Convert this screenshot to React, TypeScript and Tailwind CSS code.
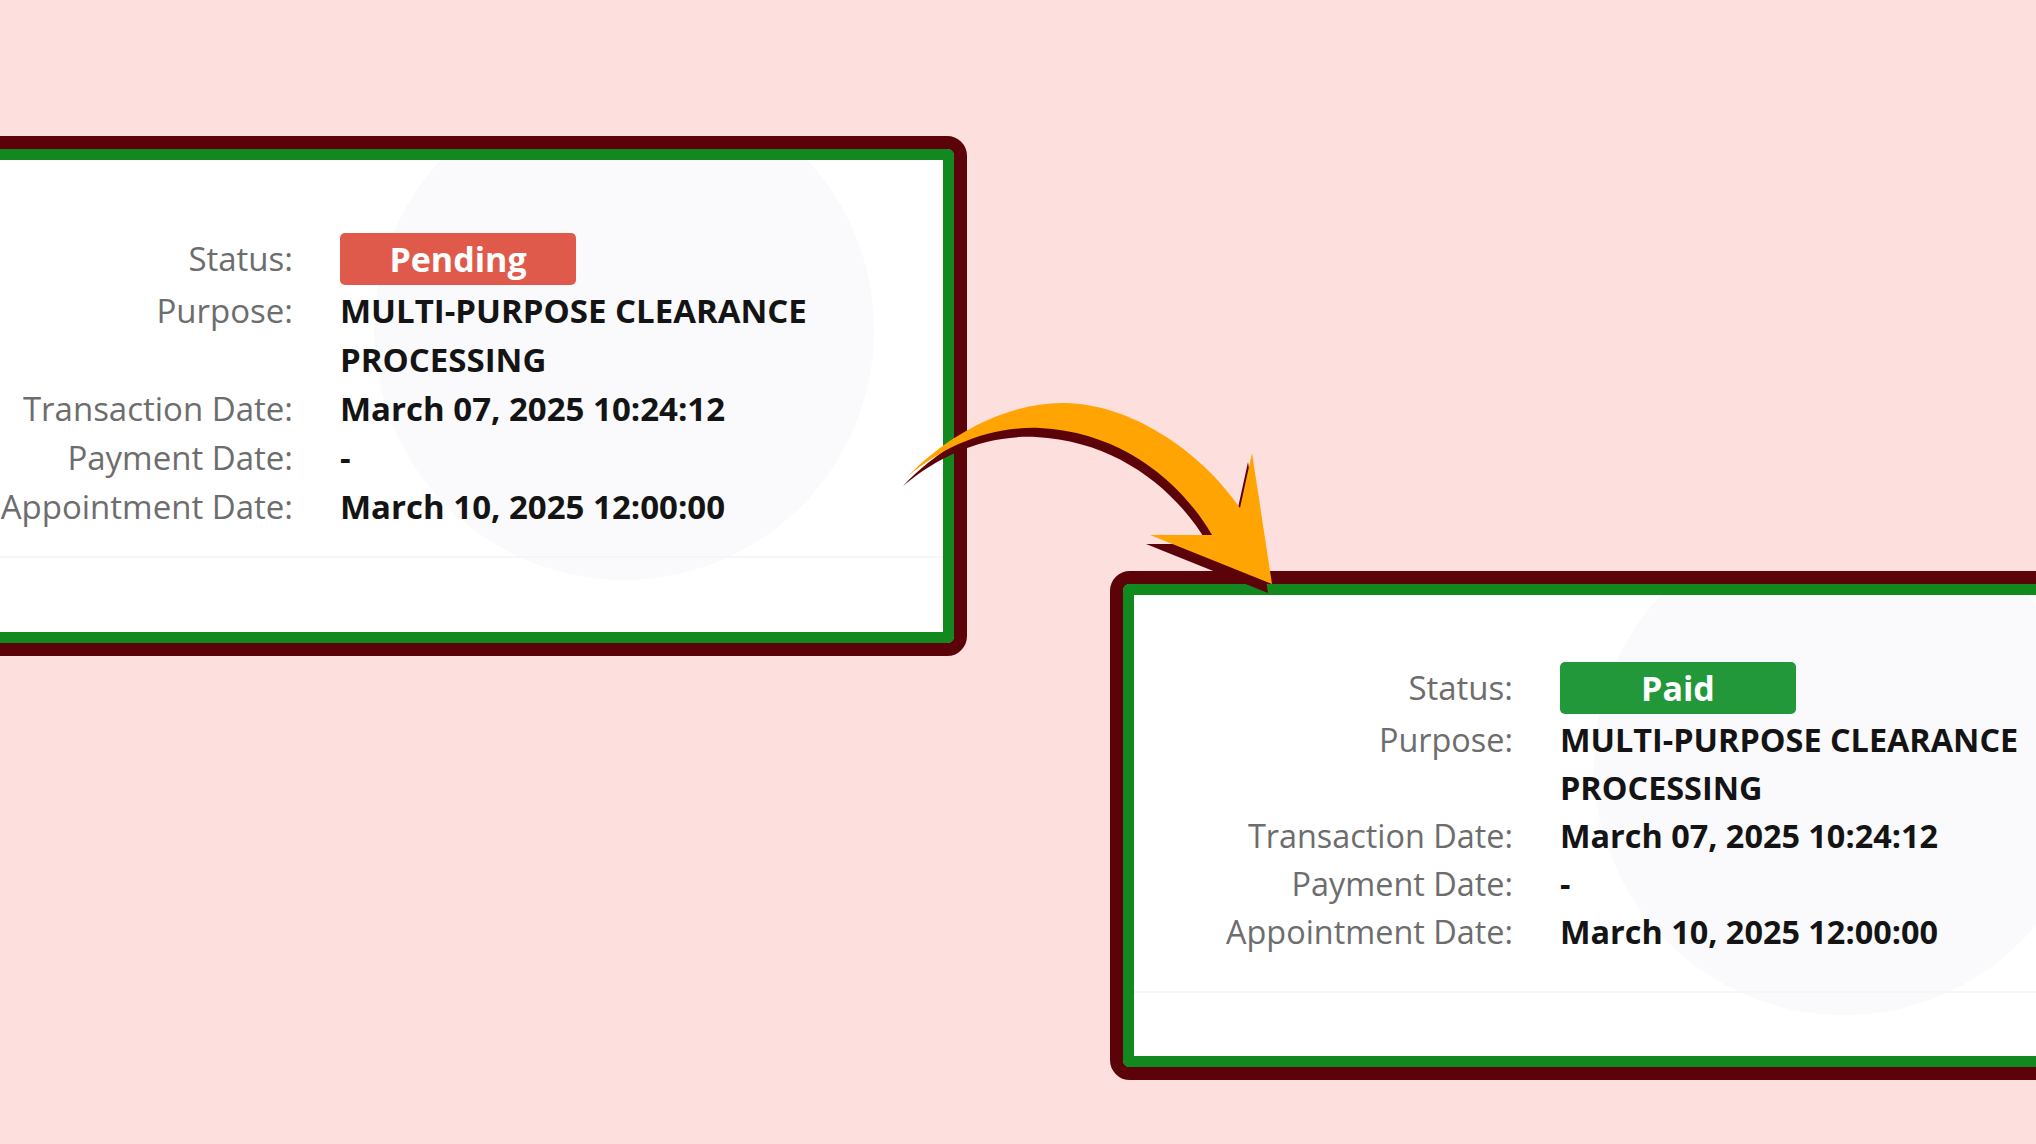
import React from "react";

const LABELS = ["Purpose:", "Transaction Date:", "Payment Date:", "Appointment Date:"];

function StatusCard({
  paid,
  frameClass,
  bodyClass,
  textClass,
}: {
  paid?: boolean;
  frameClass: string;
  bodyClass: string;
  textClass: string;
}) {
  const label = `flex justify-end text-right text-[#6d6d6d] ${textClass}`;
  const value = `font-bold text-[#141414] ${textClass}`;

  return (
    <div className={`shrink-0 rounded-[20px] border-[13px] border-[#5c0309] ${frameClass}`}>
      <div className="relative h-full overflow-hidden rounded-[6px] border-[11px] border-[#12891f] bg-white">
        {/* faint watermark from the original page */}
        <div className="absolute left-[460px] top-[-80px] h-[500px] w-[500px] rounded-full bg-[#fafafc]" />
        <div className="absolute left-0 right-0 top-[396px] h-[2px] bg-[#f6f6f6]" />

        <div className={`relative grid grid-cols-[379px_500px] gap-x-[47px] ${bodyClass}`}>
          <div className="flex h-[54px] items-center justify-end text-[33px] text-[#6d6d6d]">Status:</div>
          <div className="flex h-[54px] items-center">
            <span
              className={`flex h-[52px] w-[236px] items-center justify-center rounded-[5px] text-[34px] font-bold text-white ${
                paid ? "bg-[#23983b]" : "bg-[#e05a4c]"
              }`}
            >
              {paid ? "Paid" : "Pending"}
            </span>
          </div>

          <div className={label}>{LABELS[0]}</div>
          <div className={value}>MULTI-PURPOSE CLEARANCE PROCESSING</div>

          <div className={label}>{LABELS[1]}</div>
          <div className={value}>March 07, 2025 10:24:12</div>

          <div className={label}>{LABELS[2]}</div>
          <div className={value}>-</div>

          <div className={label}>{LABELS[3]}</div>
          <div className={value}>March 10, 2025 12:00:00</div>
        </div>
      </div>
    </div>
  );
}

function Arrow() {
  const d =
    "M907,477 C950,432 1010,402 1065,403 C1130,404 1200,450 1240,508 L1252,453 L1272,584 L1150,535 L1212,535 C1180,480 1120,432 1040,428 C990,426 945,445 907,477 Z";
  return (
    <svg className="pointer-events-none absolute left-0 top-0" width="2036" height="1144" viewBox="0 0 2036 1144">
      <path d={d} fill="#5c0309" transform="translate(-4 9)" />
      <path d={d} fill="#ffa402" />
    </svg>
  );
}

export default function App() {
  return (
    <div className="relative flex h-[1144px] w-[2036px] flex-col overflow-hidden bg-[#fddfde] font-['Open_Sans',sans-serif]">
      <StatusCard
        frameClass="ml-[-110px] mt-[136px] h-[520px] w-[1077px]"
        bodyClass="pt-[72px]"
        textClass="text-[33px] leading-[49px]"
      />
      <StatusCard
        paid
        frameClass="ml-[1110px] mt-[-85px] h-[509px] w-[1077px]"
        bodyClass="pt-[66px]"
        textClass="text-[32.4px] leading-[48px]"
      />
      <Arrow />
    </div>
  );
}
